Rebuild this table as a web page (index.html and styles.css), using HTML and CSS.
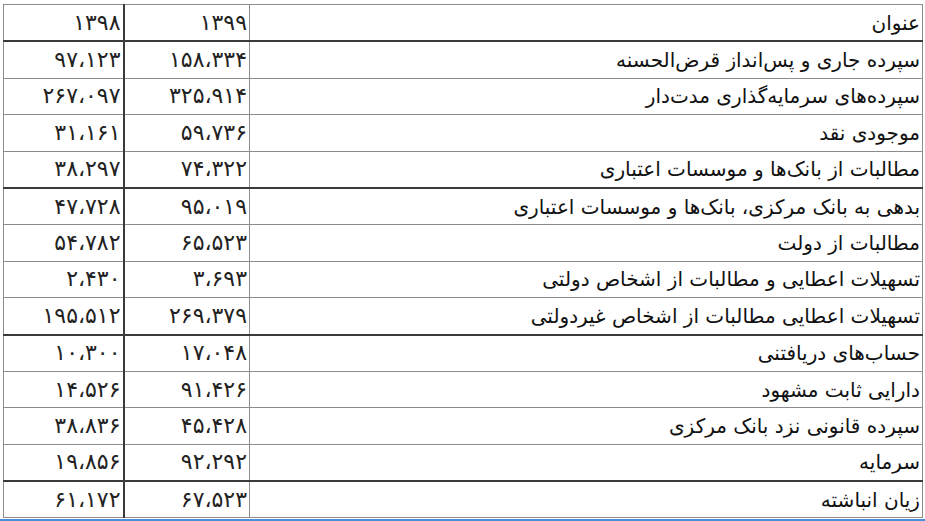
FILE: index.html
```html
<!DOCTYPE html>
<html lang="fa">
<head>
<meta charset="utf-8">
<link rel="stylesheet" href="styles.css">
</head>
<body>
<div class="page">
<table class="fin" dir="rtl">
<colgroup><col class="c-title"><col class="c-y1"><col class="c-y2"></colgroup>
<tbody>
<tr class="dark"><td>عنوان</td><td class="num">۱۳۹۹</td><td class="num">۱۳۹۸</td></tr>
<tr><td>سپرده جاری و پس‌انداز قرض‌الحسنه</td><td class="num">۱۵۸،۳۳۴</td><td class="num">۹۷،۱۲۳</td></tr>
<tr><td>سپرده‌های سرمایه‌گذاری مدت‌دار</td><td class="num">۳۲۵،۹۱۴</td><td class="num">۲۶۷،۰۹۷</td></tr>
<tr><td>موجودی نقد</td><td class="num">۵۹،۷۳۶</td><td class="num">۳۱،۱۶۱</td></tr>
<tr class="dark"><td>مطالبات از بانک‌ها و موسسات اعتباری</td><td class="num">۷۴،۳۲۲</td><td class="num">۳۸،۲۹۷</td></tr>
<tr><td>بدهی به بانک مرکزی، بانک‌ها و موسسات اعتباری</td><td class="num">۹۵،۰۱۹</td><td class="num">۴۷،۷۲۸</td></tr>
<tr><td>مطالبات از دولت</td><td class="num">۶۵،۵۲۳</td><td class="num">۵۴،۷۸۲</td></tr>
<tr><td>تسهیلات اعطایی و مطالبات از اشخاص دولتی</td><td class="num">۳،۶۹۳</td><td class="num">۲،۴۳۰</td></tr>
<tr class="dark"><td>تسهیلات اعطایی مطالبات از اشخاص غیردولتی</td><td class="num">۲۶۹،۳۷۹</td><td class="num">۱۹۵،۵۱۲</td></tr>
<tr><td>حساب‌های دریافتنی</td><td class="num">۱۷،۰۴۸</td><td class="num">۱۰،۳۰۰</td></tr>
<tr><td>دارایی ثابت مشهود</td><td class="num">۹۱،۴۲۶</td><td class="num">۱۴،۵۲۶</td></tr>
<tr><td>سپرده قانونی نزد بانک مرکزی</td><td class="num">۴۵،۴۲۸</td><td class="num">۳۸،۸۳۶</td></tr>
<tr class="dark"><td>سرمایه</td><td class="num">۹۲،۲۹۲</td><td class="num">۱۹،۸۵۶</td></tr>
<tr><td>زیان انباشته</td><td class="num">۶۷،۵۲۳</td><td class="num">۶۱،۱۷۲</td></tr>
</tbody>
</table>
<div class="bar"></div>
</div>
</body>
</html>
```
FILE: styles.css
```css
html, body {
  margin: 0;
  padding: 0;
  background: #fff;
}
.page {
  width: 925px;
  height: 521px;
  overflow: hidden;
  padding-top: 4px;
  box-sizing: border-box;
}
.fin {
  margin-left: 3px;
  width: 919px;
  border-collapse: collapse;
  table-layout: fixed;
  font-family: "DejaVu Sans", "Liberation Sans", sans-serif;
  font-size: 20px;
  color: #111;
}
.c-title { width: 673px; }
.c-y1 { width: 126px; }
.c-y2 { width: 120px; }
.fin td {
  border: 1px solid #8c8c8c;
  height: 35.4px;
  padding: 0 2px 0 0;
  text-align: right;
  vertical-align: middle;
  white-space: nowrap;
  overflow: hidden;
  line-height: 1;
}
.fin td.num {
  font-size: 22px;
  color: #222;
}
.fin td:nth-child(2) {
  border-left: 2px solid #3a3a3a;
}
.fin tr.dark td {
  border-bottom: 2px solid #3a3a3a;
}
.bar {
  height: 6px;
  margin-top: 1px;
  background: #4a8fdb;
}
```
